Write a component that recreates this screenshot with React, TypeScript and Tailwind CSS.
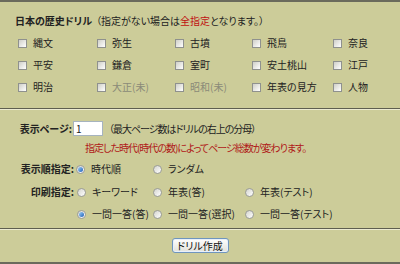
import React from 'react';

const eras: { name: string; disabled?: boolean }[][] = [
  [{ name: '縄文' }, { name: '弥生' }, { name: '古墳' }, { name: '飛鳥' }, { name: '奈良' }],
  [{ name: '平安' }, { name: '鎌倉' }, { name: '室町' }, { name: '安土桃山' }, { name: '江戸' }],
  [
    { name: '明治' },
    { name: '大正(未)', disabled: true },
    { name: '昭和(未)', disabled: true },
    { name: '年表の見方' },
    { name: '人物' },
  ],
];

const colWidths = ['w-[79px]', 'w-[78px]', 'w-[77px]', 'w-[81px]', 'w-[60px]'];

const CheckBox = () => (
  <span className="inline-block h-[9px] w-[9px] shrink-0 border border-[#8f918e] bg-gradient-to-br from-[#cfcfc8] to-white" />
);

const Radio = ({ checked = false }: { checked?: boolean }) => (
  <span className="flex h-[9px] w-[9px] shrink-0 items-center justify-center rounded-full border border-[#9a9c98] bg-gradient-to-br from-[#d4d4ce] to-white">
    {checked && <span className="h-[5px] w-[5px] rounded-full bg-gradient-to-br from-[#9fd0f5] to-[#1d5fb8]" />}
  </span>
);

const Separator = () => <div className="border-t border-b border-t-[#5e5e50] border-b-[#ecebd2]" />;

const Option = ({ label, checked, className }: { label: string; checked?: boolean; className: string }) => (
  <div className={`flex items-center gap-[6px] ${className}`}>
    <Radio checked={checked} />
    <span>{label}</span>
  </div>
);

export default function App() {
  return (
    <div className="h-[264px] w-[400px] overflow-hidden border-t-2 border-b-2 border-t-[#6a6a5c] border-b-[#6a6a5c] bg-[#cccc99] font-['Noto_Sans_CJK_JP',sans-serif] text-[10px] leading-[12px] text-[#222] [font-feature-settings:'palt']">
      <div className="pb-[10px] pt-[13px]">
        <div className="flex pl-[15px]">
          <span className="font-bold">日本の歴史ドリル</span>
          <span className="ml-[4px]">
            （指定がない場合は<span className="text-[#c01010]">全指定</span>となります。）
          </span>
        </div>
        <div className="mt-[5px] pl-[18px]">
          {eras.map((row, i) => (
            <div key={i} className="flex h-[22px] items-center">
              {row.map((era, j) => (
                <label key={era.name} className={`flex items-center gap-[6px] ${colWidths[j]}`}>
                  <CheckBox />
                  <span className={era.disabled ? 'text-[#8a8a78]' : ''}>{era.name}</span>
                </label>
              ))}
            </div>
          ))}
        </div>
      </div>

      <Separator />

      <div className="pb-[6px] pt-[11px]">
        <div className="flex items-center">
          <span className="w-[72px] text-right font-bold">表示ページ:</span>
          <div className="ml-px flex h-[15px] w-[30px] items-center border border-[#a6b3bf] bg-white pl-[2px]">1</div>
          <span className="ml-[6px] tracking-[-1px]">（最大ページ数はドリルの右上の分母）</span>
        </div>
        <div className="ml-[85px] mt-[6px] tracking-[-1px] text-[#b01818]">
          指定した時代(時代の数)によってページ総数が変わります。
        </div>

        <div className="mt-[7px] flex h-[16px] items-center">
          <span className="w-[74px] text-right font-bold">表示順指定:</span>
          <Option label="時代順" checked className="w-[78px] pl-[2px]" />
          <Option label="ランダム" className="w-[92px] pl-px" />
        </div>
        <div className="mt-[7px] flex h-[16px] items-center">
          <span className="w-[74px] text-right font-bold">印刷指定:</span>
          <Option label="キーワード" className="w-[78px] pl-[3px]" />
          <Option label="年表(答)" className="w-[92px] pl-px" />
          <Option label="年表(テスト)" className="pl-px" />
        </div>
        <div className="mt-[6px] flex h-[16px] items-center">
          <span className="w-[74px]" />
          <Option label="一問一答(答)" checked className="w-[78px] pl-[3px]" />
          <Option label="一問一答(選択)" className="w-[92px] pl-px" />
          <Option label="一問一答(テスト)" className="pl-px" />
        </div>
      </div>

      <Separator />

      <div className="flex justify-center pt-[8px]">
        <button className="h-[15px] w-[57px] rounded-[3px] border border-[#6f95bd] bg-gradient-to-b from-white to-[#e2e2da] text-[10px] leading-[12px] text-[#111] shadow-[inset_0_0_0_1px_#e8f0fa]">
          ドリル作成
        </button>
      </div>
    </div>
  );
}
